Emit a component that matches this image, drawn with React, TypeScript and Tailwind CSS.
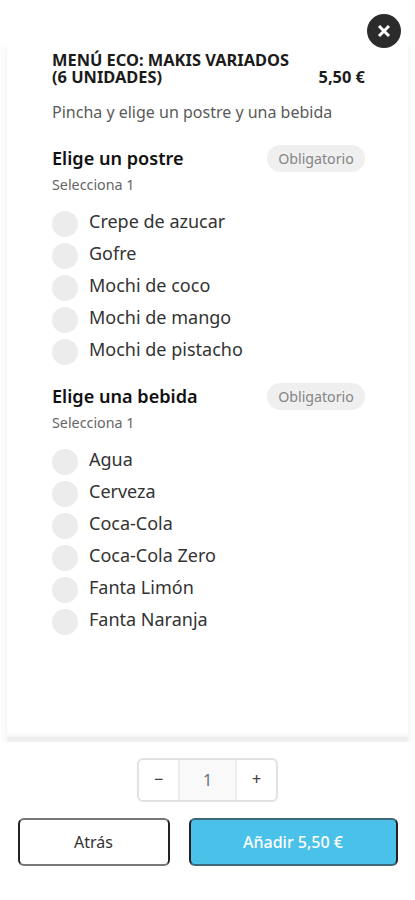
import React, { useState } from 'react';

interface OptionGroupProps {
  title: string;
  options: string[];
}

const desserts = ['Crepe de azucar', 'Gofre', 'Mochi de coco', 'Mochi de mango', 'Mochi de pistacho'];
const drinks = ['Agua', 'Cerveza', 'Coca-Cola', 'Coca-Cola Zero', 'Fanta Limón', 'Fanta Naranja'];

const OptionGroup: React.FC<OptionGroupProps> = ({ title, options }) => {
  const [selected, setSelected] = useState<string | null>(null);

  return (
    <section>
      <div className="flex h-[27px] items-center justify-between">
        <h2 className="pb-0.5 text-[18.1px] leading-6 font-semibold text-[#111]">{title}</h2>
        <span className="flex h-[27px] w-[98px] items-center justify-center rounded-full bg-[#efefef] text-[14.2px] text-[#858585]">
          Obligatorio
        </span>
      </div>
      <p className="mt-[3px] text-[14.3px] leading-5 text-[#666]">Selecciona 1</p>
      <ul className="mt-[15px]">
        {options.map((option) => (
          <li key={option} className="h-8">
            <button type="button" onClick={() => setSelected(option)} className="flex items-start gap-[11px]">
              <span className={`mt-[1px] size-[26px] rounded-full ${selected === option ? 'bg-[#4ac1e8]' : 'bg-[#ececec]'}`} />
              <span className="text-[18px] leading-[22px] text-[#333]">{option}</span>
            </button>
          </li>
        ))}
      </ul>
    </section>
  );
};

const App: React.FC = () => {
  const [quantity, setQuantity] = useState<number>(1);

  return (
    <div className="relative flex h-[900px] w-[415px] flex-col overflow-hidden bg-white pt-10 font-['Noto_Sans',sans-serif]">
      <button
        type="button"
        aria-label="Cerrar"
        className="absolute top-[14px] left-[367px] z-10 flex size-[34px] items-center justify-center rounded-full bg-[#2b2b2b]"
      >
        <svg width="14" height="14" viewBox="0 0 14 14" fill="none" stroke="#fff" strokeWidth="3">
          <path d="M2 2l10 10M12 2L2 12" />
        </svg>
      </button>

      <main className="mx-[7px] h-[697px] bg-white pt-[11px] pr-[43px] pl-[45px] shadow-[0_5px_2px_0_#eeeeee,0_12px_6px_6px_#fafafa,inset_0_-6px_6px_-4px_#f4f4f4]">
        <div className="flex items-end justify-between text-[16.4px] leading-[17px] font-bold text-[#1b1b1b]">
          <h1 className="w-[250px]">
            MENÚ ECO: MAKIS VARIADOS
            <br />
            (6 UNIDADES)
          </h1>
          <span>5,50 €</span>
        </div>
        <p className="mt-[15px] text-[16px] leading-6 text-[#5a5a5a]">Pincha y elige un postre y una bebida</p>
        <div className="mt-[21px] flex flex-col gap-[13px]">
          <OptionGroup title="Elige un postre" options={desserts} />
          <OptionGroup title="Elige una bebida" options={drinks} />
        </div>
      </main>

      <footer className="z-10 mt-[5px] flex h-[158px] flex-col items-center bg-white pt-4">
        <div className="flex h-11 w-[141px] overflow-hidden rounded-md border-2 border-[#e2e2e2] text-[#444]">
          <button type="button" className="flex-1 pb-0.5 text-[16px] font-medium" onClick={() => setQuantity(Math.max(1, quantity - 1))}>
            −
          </button>
          <span className="flex w-[59px] items-center justify-center border-x-2 border-[#ededed] bg-[#f9f9f9] text-[17px] text-[#6c757d]">
            {quantity}
          </span>
          <button type="button" className="flex-1 pb-0.5 text-[16px] font-medium" onClick={() => setQuantity(quantity + 1)}>
            +
          </button>
        </div>
        <div className="mt-4 flex h-12 w-[380px] gap-[19px] text-[16px]">
          <button type="button" className="w-[152px] rounded-md border-2 border-x-[#222] border-y-[#777] text-[#333]">
            Atrás
          </button>
          <button type="button" className="flex-1 rounded-md border-2 border-x-[#222] border-y-[#3d6878] bg-[#4ac1e8] font-medium text-white">
            Añadir 5,50 €
          </button>
        </div>
      </footer>
    </div>
  );
};

export default App;
